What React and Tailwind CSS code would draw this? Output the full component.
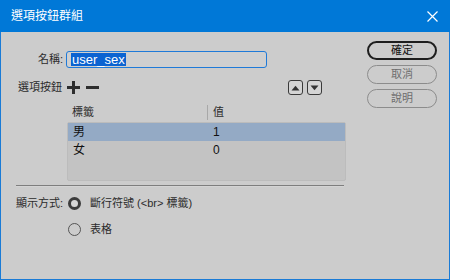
// App.jsx
const font = "font-['Liberation_Sans','Noto_Sans_CJK_TC',sans-serif]";

function Radio({ checked }) {
  return checked ? (
    <span className="w-[13px] h-[13px] rounded-full border-[3px] border-[#3c3c3c] bg-[#d6d6d6] block" />
  ) : (
    <span className="w-[13px] h-[13px] rounded-full border border-[#555] bg-[#cccccc] block" />
  );
}

function ArrowBox({ up }) {
  return (
    <span className="w-[15px] h-[15px] rounded-[3px] border border-[#3a3a3a] bg-[#d4d4d4] flex items-center justify-center">
      <svg width="9" height="6" viewBox="0 0 9 6">
        {up ? <path d="M0.5 5.5 L4.5 0.8 L8.5 5.5 Z" fill="#333" /> : <path d="M0.5 0.5 L4.5 5.2 L8.5 0.5 Z" fill="#333" />}
      </svg>
    </span>
  );
}

export default function App() {
  return (
    <div className={`w-[450px] h-[280px] border border-[#1a7bd6] border-t-0 bg-[#cccccc] flex flex-col ${font} text-[11px] text-[#2b2b2b]`}>
      <div className="h-[32px] -mx-px bg-[#0078d7] flex items-center justify-between pl-[11px] pr-[12px] text-white shrink-0">
        <span className="text-[12px]">選項按鈕群組</span>
        <svg width="11" height="11" viewBox="0 0 11 11">
          <path d="M0.5 0.5 L10.5 10.5 M10.5 0.5 L0.5 10.5" stroke="#fff" strokeWidth="1.2" />
        </svg>
      </div>

      <div className="flex flex-1">
        <div className="flex-1 flex flex-col">
          <div className="mt-[19px] h-[17px] flex items-center">
            <span className="w-[62px] text-right">名稱:</span>
            <div className="ml-[3px] w-[201px] h-[17px] rounded-[3px] border border-[#1f7ad8] bg-[#cfcfcf] flex items-center pl-[4px]">
              <span className="bg-[#0b63d1] text-white text-[13px] leading-[13px] px-px">user_sex</span>
            </div>
          </div>

          <div className="mt-[12px] h-[15px] flex items-center w-[321px]">
            <span className="ml-[17px]">選項按鈕</span>
            <svg className="ml-[5px]" width="13" height="13" viewBox="0 0 13 13">
              <path d="M5 0 H8 V5 H13 V8 H8 V13 H5 V8 H0 V5 H5 Z" fill="#2e2e2e" />
            </svg>
            <svg className="ml-[6px]" width="13" height="13" viewBox="0 0 13 13">
              <rect x="0" y="5" width="13" height="3" fill="#2e2e2e" />
            </svg>
            <div className="ml-auto flex gap-[4px]">
              <ArrowBox up />
              <ArrowBox />
            </div>
          </div>

          <div className="mt-[10px] h-[15px] flex items-center">
            <span className="ml-[71px] w-[135px]">標籤</span>
            <span className="w-px h-[15px] bg-[#a8a8a8]" />
            <span className="ml-[5px]">值</span>
          </div>

          <div className="mt-[2px] ml-[66px] w-[279px] h-[59px] bg-[#c3c3c3] border border-[#bcbcbc] rounded-[2px] text-[12px] text-[#111]">
            <div className="h-[18px] bg-[#94aac5] flex items-center">
              <span className="ml-[5px] w-[140px]">男</span>
              <span>1</span>
            </div>
            <div className="h-[18px] flex items-center">
              <span className="ml-[5px] w-[140px]">女</span>
              <span>0</span>
            </div>
          </div>

          <div className="mt-[4px] ml-[15px] w-[328px] h-px bg-[#7e7e7e]" />
          <div className="ml-[15px] w-[328px] h-px bg-[#d4d4d4]" />

          <div className="mt-[9px] h-[14px] flex items-center">
            <span className="ml-[15px] w-[52px]">顯示方式:</span>
            <Radio checked />
            <span className="ml-[9px]">斷行符號 (&lt;br&gt; 標籤)</span>
          </div>
          <div className="mt-[12px] h-[14px] flex items-center">
            <span className="ml-[67px]" />
            <Radio />
            <span className="ml-[9px]">表格</span>
          </div>
        </div>

        <div className="w-[70px] mr-[12px] mt-[9px] flex flex-col gap-[5px]">
          <button className="h-[19px] rounded-full border-2 border-[#1e1e1e] text-[11px] text-[#111] flex items-center justify-center bg-[#cccccc]">確定</button>
          <button className="h-[19px] rounded-full border border-[#8c8c8c] text-[11px] text-[#6e6e6e] flex items-center justify-center bg-[#cccccc]">取消</button>
          <button className="h-[19px] rounded-full border border-[#8c8c8c] text-[11px] text-[#6e6e6e] flex items-center justify-center bg-[#cccccc]">說明</button>
        </div>
      </div>
    </div>
  );
}
